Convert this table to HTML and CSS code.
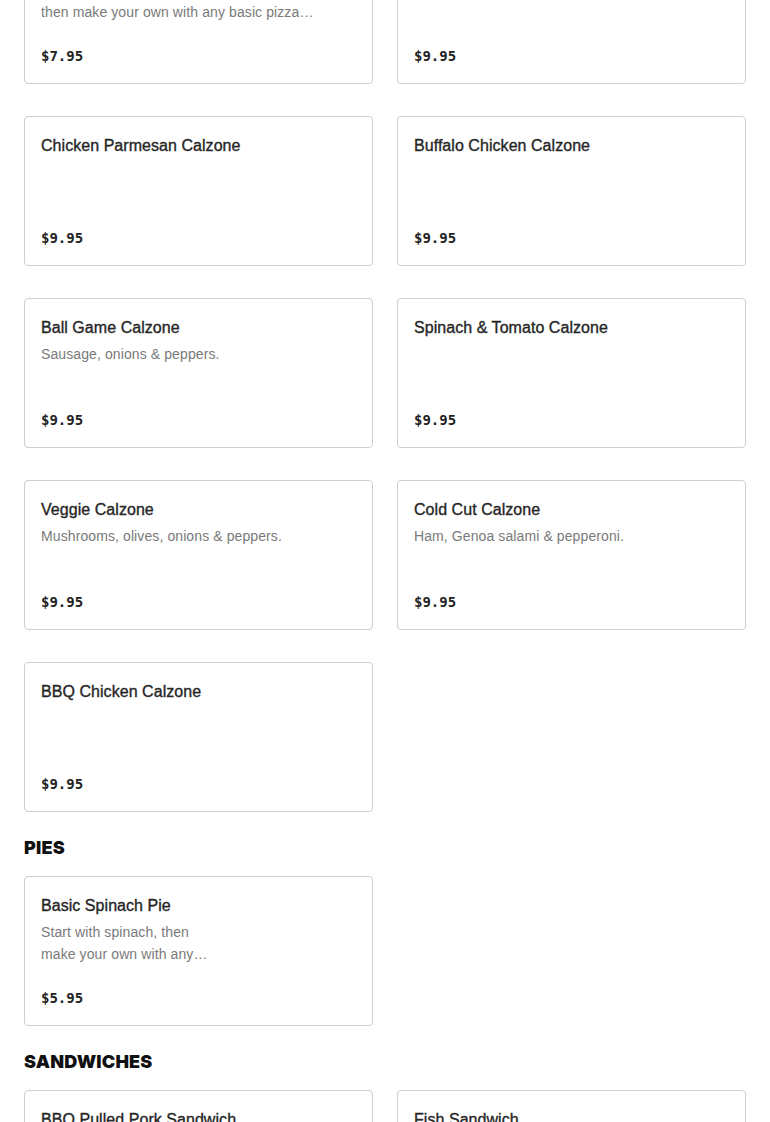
FILE: index.html
```html
<!DOCTYPE html>
<html lang="en">
<head>
<meta charset="utf-8">
<title>Menu</title>
<link rel="stylesheet" href="styles.css">
</head>
<body>
<main class="menu">
  <section class="section first">
    <div class="grid">
      <div class="card">
        <div class="title">Basic Calzone</div>
        <div class="desc">Start with ricotta &amp; mozzarella,
then make your own with any basic pizza
toppings.</div>
        <div class="price">$7.95</div>
      </div>
      <div class="card">
        <div class="title">Steak &amp; Cheese Calzone</div>
        <div class="desc"></div>
        <div class="price">$9.95</div>
      </div>
      <div class="card">
        <div class="title">Chicken Parmesan Calzone</div>
        <div class="price">$9.95</div>
      </div>
      <div class="card">
        <div class="title">Buffalo Chicken Calzone</div>
        <div class="price">$9.95</div>
      </div>
      <div class="card">
        <div class="title">Ball Game Calzone</div>
        <div class="desc">Sausage, onions &amp; peppers.</div>
        <div class="price">$9.95</div>
      </div>
      <div class="card">
        <div class="title">Spinach &amp; Tomato Calzone</div>
        <div class="price">$9.95</div>
      </div>
      <div class="card">
        <div class="title">Veggie Calzone</div>
        <div class="desc">Mushrooms, olives, onions &amp; peppers.</div>
        <div class="price">$9.95</div>
      </div>
      <div class="card">
        <div class="title">Cold Cut Calzone</div>
        <div class="desc">Ham, Genoa salami &amp; pepperoni.</div>
        <div class="price">$9.95</div>
      </div>
      <div class="card">
        <div class="title">BBQ Chicken Calzone</div>
        <div class="price">$9.95</div>
      </div>
    </div>
  </section>

  <section class="section">
    <h2 class="heading">PIES</h2>
    <div class="grid">
      <div class="card">
        <div class="title">Basic Spinach Pie</div>
        <div class="desc">Start with spinach, then
make your own with any
basic pizza toppings.</div>
        <div class="price">$5.95</div>
      </div>
    </div>
  </section>

  <section class="section">
    <h2 class="heading">SANDWICHES</h2>
    <div class="grid">
      <div class="card">
        <div class="title">BBQ Pulled Pork Sandwich</div>
        <div class="price">$8.95</div>
      </div>
      <div class="card">
        <div class="title">Fish Sandwich</div>
        <div class="price">$8.95</div>
      </div>
    </div>
  </section>
</main>
</body>
</html>
```

FILE: styles.css
```css
html, body {
  margin: 0;
  padding: 0;
  background: #ffffff;
}

body {
  font-family: "Liberation Sans", Arial, sans-serif;
  color: #222222;
}

.menu {
  padding: 0 24px;
  margin-top: -66px;
}

.section {
  display: flex;
  flex-direction: column;
}

.heading {
  margin: 24px 0 16px;
  font-family: Inter, "Liberation Sans", sans-serif;
  font-weight: 900;
  font-size: 18px;
  line-height: 24px;
  color: #111111;
  letter-spacing: 0.2px;
}

.grid {
  display: grid;
  grid-template-columns: 1fr 1fr;
  column-gap: 24px;
  row-gap: 32px;
}

.card {
  box-sizing: border-box;
  min-height: 150px;
  border: 1px solid #cfcfcf;
  border-radius: 4px;
  padding: 17px 16px 16px;
  display: flex;
  flex-direction: column;
  background: #ffffff;
}

.title {
  font-family: "Liberation Sans", Arial, sans-serif;
  font-size: 16px;
  font-weight: 500;
  line-height: 24px;
  color: #262626;
  -webkit-text-stroke: 0.35px #262626;
  letter-spacing: 0.05px;
}

.desc {
  margin-top: 3px;
  font-size: 14px;
  line-height: 22px;
  color: #7a7a7a;
  white-space: pre-line;
  display: -webkit-box;
  -webkit-box-orient: vertical;
  -webkit-line-clamp: 2;
  overflow: hidden;
  letter-spacing: 0.1px;
}

.price {
  margin-top: auto;
  font-family: "DejaVu Sans Mono", "Liberation Mono", monospace;
  font-weight: 700;
  font-size: 14px;
  line-height: 22px;
  color: #222222;
}
```
